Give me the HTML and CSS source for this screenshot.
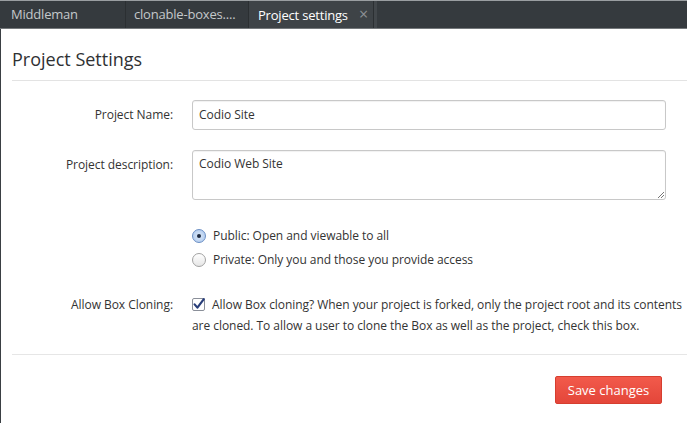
FILE: index.html
```html
<!DOCTYPE html>
<html>
<head>
<meta charset="utf-8">
<link rel="stylesheet" href="styles.css">
</head>
<body>
<div class="tabs">
  <div class="tab">Middleman</div>
  <div class="tab">clonable-boxes....</div>
  <div class="tab active">Project settings <span class="close">×</span></div>
  <div class="tab-rest"></div>
</div>
<div class="page">
  <h1 class="title">Project Settings</h1>
  <div class="form">
    <label class="label l-name">Project Name:</label>
    <div class="control"><div class="input">Codio Site</div></div>

    <label class="label l-desc">Project description:</label>
    <div class="control"><div class="textarea">Codio Web Site<span class="grip"><svg width="7" height="7" viewBox="0 0 7 7"><path d="M1 7 L7 1 M4 7 L7 4" stroke="#777" stroke-width="1"/></svg></span></div></div>

    <div class="label"></div>
    <div class="control radios">
      <div class="radio-row"><span class="radio checked"><span class="dot"></span></span>Public: Open and viewable to all</div>
      <div class="radio-row"><span class="radio"></span>Private: Only you and those you provide access</div>
    </div>

    <label class="label l-clone">Allow Box Cloning:</label>
    <div class="control clone"><span class="checkbox"><svg width="13" height="13" viewBox="0 0 13 13"><rect x="0.5" y="0.5" width="12" height="12" rx="1.5" fill="#fff" stroke="#8a8f99"/><path d="M2.6 6.4 L5.4 9.6 L11.8 1.2" fill="none" stroke="#2a3f7a" stroke-width="2.2" stroke-linecap="round" stroke-linejoin="round"/></svg></span>Allow Box cloning? When your project is forked, only the project root and its contents are cloned. To allow a user to clone the Box as well as the project, check this box.</div>
  </div>
  <div class="actions">
    <button class="btn">Save changes</button>
  </div>
</div>
</body>
</html>
```
FILE: styles.css
```css
html, body {
  margin: 0;
  padding: 0;
  background: #fff;
  font-family: "Open Sans", "DejaVu Sans", sans-serif;
  color: #333;
  overflow: hidden;
}
body {
  width: 687px;
  height: 423px;
}
.tabs {
  display: flex;
  height: 27px;
  background: #353a3e;
  border-top: 1px solid #9a9ea1;
  border-bottom: 1px solid #74787b;
}
.tab {
  height: 27px;
  line-height: 26px;
  font-size: 13px;
  letter-spacing: -0.2px;
  color: #c4c8cb;
  box-sizing: border-box;
  border-right: 1px solid #2b2f32;
}
.tab:nth-child(1) { width: 126px; padding-left: 11px; }
.tab:nth-child(2) { width: 123px; padding-left: 8px; }
.tab.active {
  width: 125px;
  padding-left: 9px;
  background: #3e4347;
  color: #ffffff;
  border-right: 1px solid #2b2f32;
}
.close {
  color: #8d9195;
  font-size: 16px;
  margin-left: 8px;
}
.tab-rest {
  flex: 1;
  border-left: 3px solid #42474b;
}
.page {
  border-left: 1px solid #3a3f43;
  height: 394px;
  padding: 0 0 0 11px;
}
.title {
  margin: 0;
  padding-top: 18px;
  font-size: 18px;
  font-weight: 400;
  line-height: 25px;
  color: #2f3133;
  padding-bottom: 8px;
  border-bottom: 1px solid #e3e3e3;
}
.form {
  display: grid;
  grid-template-columns: 161px 474px;
  column-gap: 19px;
  font-size: 12px;
  letter-spacing: -0.05px;
  padding-top: 19px;
}
.label {
  text-align: right;
  line-height: 30px;
  color: #333;
}
.l-name { margin-bottom: 20px; }
.l-clone { line-height: 21px; margin-top: 3px; }
.input, .textarea {
  box-sizing: border-box;
  border: 1px solid #c8c8c8;
  border-radius: 3px;
  box-shadow: inset 0 1px 1px rgba(0,0,0,0.06);
  padding: 0 6px;
  font-size: 12px;
  color: #333;
  background: #fff;
}
.input {
  height: 30px;
  line-height: 28px;
  margin-bottom: 20px;
}
.textarea {
  height: 50px;
  line-height: 26px;
  position: relative;
  margin-bottom: 24px;
}
.grip {
  position: absolute;
  right: 1px;
  bottom: 1px;
  line-height: 0;
}
.radios {
  padding-bottom: 19px;
}
.radio-row {
  display: flex;
  align-items: center;
  height: 24px;
  line-height: 24px;
}
.radio {
  box-sizing: border-box;
  width: 14px;
  height: 14px;
  border-radius: 50%;
  border: 1px solid #a2a2a2;
  background: linear-gradient(#ffffff, #e6e6e6);
  margin-right: 7px;
  display: flex;
  align-items: center;
  justify-content: center;
}
.radio.checked {
  border-color: #6b8fc4;
  background: radial-gradient(circle, #dbe8f8 0%, #aac6ec 100%);
}
.dot {
  width: 4px;
  height: 4px;
  border-radius: 50%;
  background: #1d2a40;
}
.clone {
  line-height: 21px;
  margin-top: 3px;
  margin-right: -22px;
  padding-bottom: 18px;
}
.checkbox {
  display: inline-block;
  vertical-align: -2px;
  margin-right: 7px;
  line-height: 0;
}
.actions {
  border-top: 1px solid #e6e6e6;
  display: flex;
  justify-content: flex-end;
  padding: 21px 25px 0 0;
}
.btn {
  width: 107px;
  height: 28px;
  font-family: "Open Sans", "DejaVu Sans", sans-serif;
  font-size: 13px;
  color: #fff;
  border: 1px solid #d63e2f;
  border-radius: 2px;
  background: linear-gradient(#f25a4b, #e4463a);
  padding: 0;
}
```
